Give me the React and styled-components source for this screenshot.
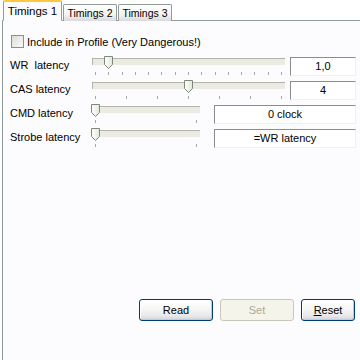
import React from "react";
import styled, { createGlobalStyle } from "styled-components";

const GlobalStyle = createGlobalStyle`
  html, body {
    margin: 0;
    padding: 0;
    background: #ffffff;
    overflow: hidden;
  }
  body {
    font-family: "Liberation Sans", Arial, sans-serif;
    font-size: 11px;
    color: #000;
  }
`;

const Window = styled.div`
  width: 360px;
  height: 360px;
  overflow: hidden;
  padding: 1px 0 0 2px;
  box-sizing: border-box;
  display: flex;
  flex-direction: column;
`;

const TabStrip = styled.div`
  display: flex;
  align-items: flex-end;
  gap: 1px;
  padding-left: 1px;
  height: 20px;
  position: relative;
  z-index: 1;
  margin-bottom: -1px;
`;

const Tab = styled.div`
  box-sizing: border-box;
  width: ${(p) => p.$w}px;
  height: ${(p) => (p.$active ? "21px" : "17px")};
  padding-top: ${(p) => (p.$active ? "3px" : "2px")};
  text-align: center;
  border: 1px solid #919b9c;
  border-bottom: ${(p) => (p.$active ? "1px solid #fcfcfe" : "none")};
  border-top: ${(p) => (p.$active ? "2px solid #ffc83c" : "1px solid #919b9c")};
  border-radius: 2px 2px 0 0;
  background: ${(p) =>
    p.$active
      ? "#fcfcfe"
      : "linear-gradient(#ffffff, #f3f3ef 60%, #d9d9e0)"};
  font-size: ${(p) => (p.$active ? "11.5px" : "10.5px")};
  white-space: nowrap;
`;

const Panel = styled.div`
  flex: none;
  height: 400px;
  width: 380px;
  border: 1px solid #919b9c;
  background: #fcfcfe;
  padding: 14px 0 0 7px;
  box-sizing: border-box;
  display: flex;
  flex-direction: column;
`;

const CheckRow = styled.label`
  display: flex;
  align-items: center;
  gap: 3px;
  height: 13px;
  margin-left: 1px;
`;

const CheckBox = styled.span`
  width: 11px;
  height: 11px;
  border: 1px solid #8a8f96;
  background: linear-gradient(135deg, #dcdcd7, #fafaf8);
`;

const Rows = styled.div`
  display: flex;
  flex-direction: column;
  margin-top: 7px;
`;

const Row = styled.div`
  display: flex;
  align-items: flex-start;
  height: 24px;
`;

const Label = styled.div`
  width: 82px;
  line-height: 15px;
  padding-top: 3px;
  white-space: pre;
`;

const SliderBox = styled.div`
  position: relative;
  width: ${(p) => p.$w}px;
  padding-top: 3px;
`;

const Track = styled.div`
  height: 6px;
  border-top: 1px solid #b4b4aa;
  border-left: 1px solid #b4b4aa;
  background: #ebebe3;
`;

const Ticks = styled.div`
  display: flex;
  justify-content: space-between;
  padding: 0 ${(p) => p.$pad}px;
  margin-top: 7px;
`;

const Tick = styled.span`
  width: 1px;
  height: 3px;
  background: #a8a8a0;
`;

const Thumb = styled.svg`
  position: absolute;
  top: 1px;
  left: ${(p) => p.$x}px;
`;

const Field = styled.div`
  box-sizing: border-box;
  width: ${(p) => p.$w}px;
  height: 19px;
  margin-left: ${(p) => p.$gap}px;
  margin-top: 2px;
  border-top: 1px solid #8c8c8c;
  border-left: 1px solid #8c8c8c;
  border-right: 1px solid #f0f0f0;
  border-bottom: 1px solid #f0f0f0;
  background: #fff;
  text-align: center;
  line-height: 17px;
`;

const ButtonRow = styled.div`
  display: flex;
  margin-top: 148px;
  padding-left: 129px;
  gap: 7px;
`;

const Button = styled.button`
  box-sizing: border-box;
  width: ${(p) => p.$w}px;
  height: 22px;
  border-radius: 3px;
  font-family: "Liberation Sans", Arial, sans-serif;
  font-size: 11px;
  padding: 0;
  border: 1px solid ${(p) => (p.disabled ? "#c9c7ba" : "#003c74")};
  color: ${(p) => (p.disabled ? "#aca899" : "#000")};
  background: ${(p) =>
    p.disabled
      ? "#f5f4ea"
      : "linear-gradient(#ffffff, #f6f6f4 45%, #e8e8ea 80%, #d6d0dc)"};
  box-shadow: ${(p) =>
    p.disabled ? "none" : "inset -1px -1px 0 #c8c8d6, inset 1px 1px 0 #fff"};
`;

function Slider({ width, ticks, value, pad = 3 }) {
  const step = (width - pad * 2 - 1) / (ticks - 1);
  const x = pad + step * value - 4;
  return (
    <SliderBox $w={width}>
      <Track />
      <Thumb $x={x} width="9" height="13" viewBox="0 0 9 13">
        <defs>
          <linearGradient id="thumbFill" x1="0" y1="0" x2="1" y2="0">
            <stop offset="0" stopColor="#ffffff" />
            <stop offset="1" stopColor="#e3e8dc" />
          </linearGradient>
        </defs>
        <path
          d="M0.5 0.5H8.5V8.5L4.5 12.5L0.5 8.5Z"
          fill="url(#thumbFill)"
          stroke="#7c8878"
        />
      </Thumb>
      <Ticks $pad={pad}>
        {Array.from({ length: ticks }).map((_, i) => (
          <Tick key={i} />
        ))}
      </Ticks>
    </SliderBox>
  );
}

export default function App() {
  return (
    <>
      <GlobalStyle />
      <Window>
        <TabStrip>
          <Tab $active $w={59}>Timings 1</Tab>
          <Tab $w={54}>Timings 2</Tab>
          <Tab $w={54}>Timings 3</Tab>
        </TabStrip>
        <Panel>
          <CheckRow>
            <CheckBox />
            Include in Profile (Very Dangerous!)
          </CheckRow>
          <Rows>
            <Row>
              <Label>WR  latency</Label>
              <Slider width={193} ticks={15} value={1} />
              <Field $w={66} $gap={5}>1,0</Field>
            </Row>
            <Row>
              <Label>CAS latency</Label>
              <Slider width={193} ticks={7} value={3} />
              <Field $w={66} $gap={5}>4</Field>
            </Row>
            <Row>
              <Label>CMD latency</Label>
              <Slider width={108} ticks={2} value={0} />
              <Field $w={142} $gap={14}>0 clock</Field>
            </Row>
            <Row>
              <Label>Strobe latency</Label>
              <Slider width={108} ticks={2} value={0} />
              <Field $w={142} $gap={14}>=WR latency</Field>
            </Row>
          </Rows>
          <ButtonRow>
            <Button $w={74}>Read</Button>
            <Button $w={74} disabled>
              Set
            </Button>
            <Button $w={54}>
              <u>R</u>eset
            </Button>
          </ButtonRow>
        </Panel>
      </Window>
    </>
  );
}
